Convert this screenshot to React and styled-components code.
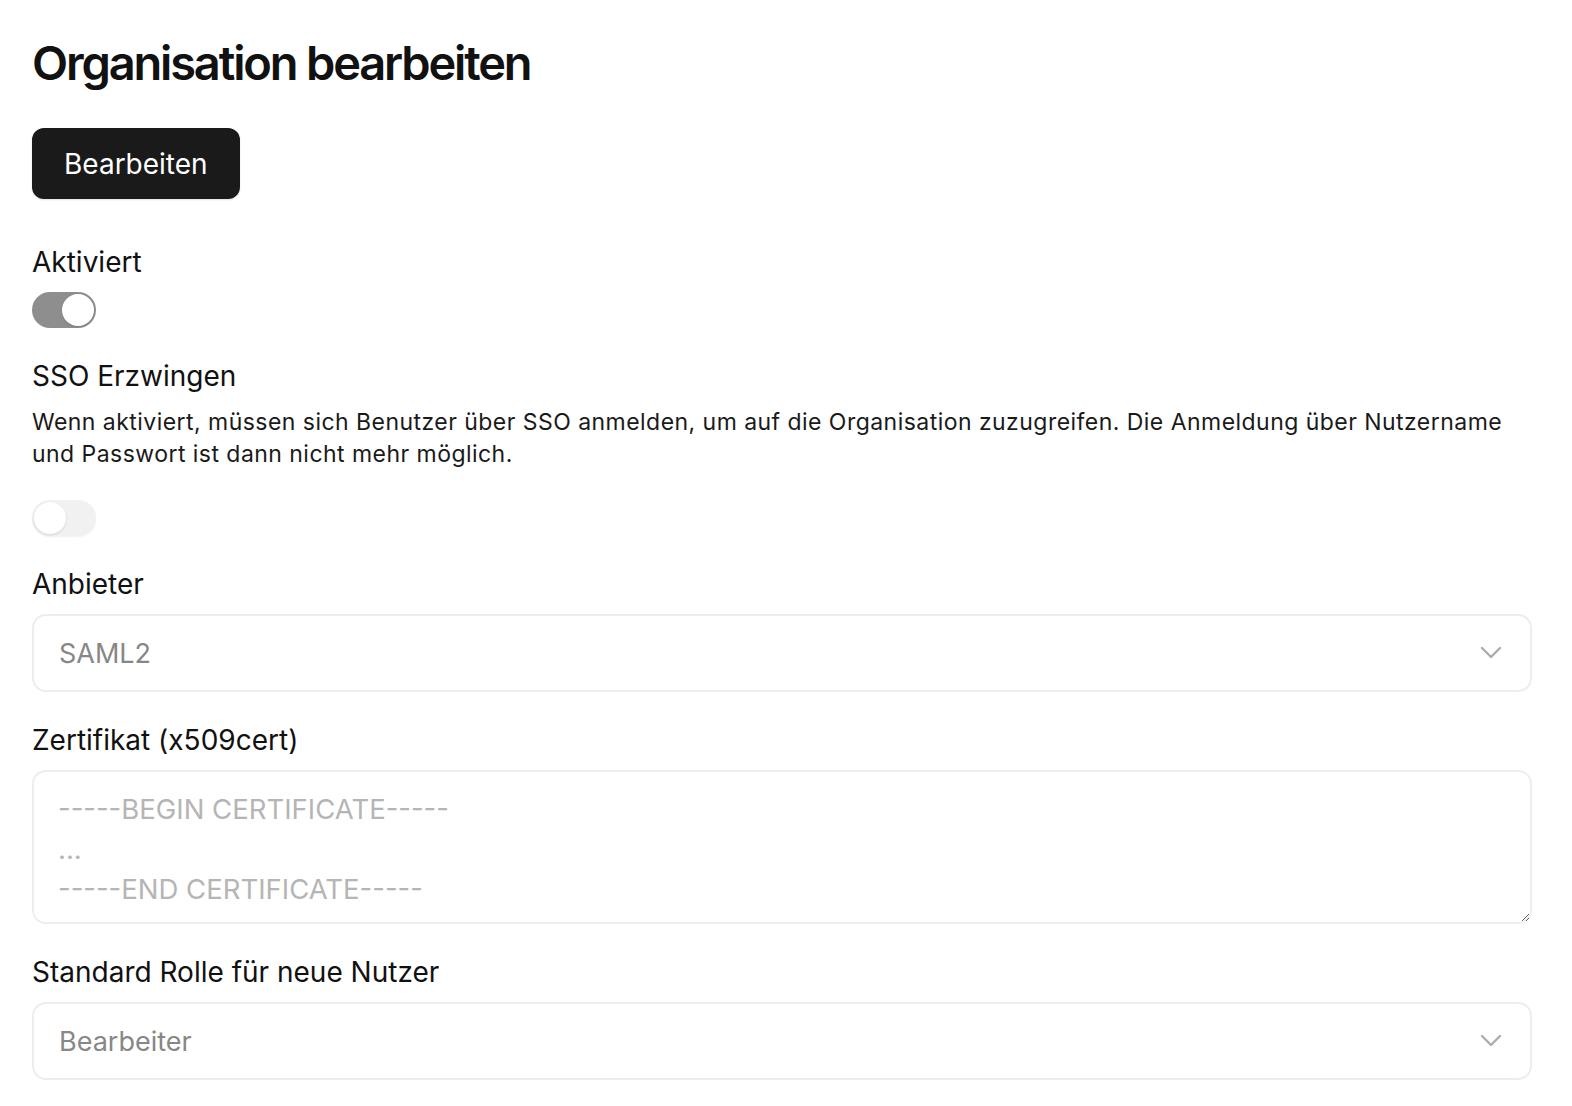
import React from "react";
import styled, { createGlobalStyle } from "styled-components";

const GlobalStyle = createGlobalStyle`
  * { box-sizing: border-box; }
  html, body { margin: 0; padding: 0; background: #ffffff; }
  body {
    font-family: Inter, "Noto Sans", "Liberation Sans", sans-serif;
    color: #111111;
    -webkit-font-smoothing: antialiased;
  }
`;

const Page = styled.main`
  padding: 34px 40px 0 32px;
  display: flex;
  flex-direction: column;
`;

const Title = styled.h1`
  margin: 0;
  font-size: 47px;
  line-height: 58px;
  font-weight: 600;
  letter-spacing: -0.046em;
  color: #111111;
`;

const PrimaryButton = styled.button`
  align-self: flex-start;
  margin-top: 36px;
  margin-bottom: 45px;
  height: 71px;
  padding: 0 32px;
  border: none;
  border-radius: 12px;
  background: #1a1a1a;
  color: #ffffff;
  font-family: inherit;
  font-size: 28px;
  font-weight: 400;
  box-shadow: 0 1px 2px rgba(0, 0, 0, 0.12);
  cursor: pointer;
`;

const Field = styled.section`
  display: flex;
  flex-direction: column;
  align-items: stretch;
  margin-bottom: 30px;
  &:last-child {
    margin-bottom: 0;
  }
`;

const Label = styled.label`
  font-size: 28px;
  line-height: 36px;
  font-weight: 400;
  color: #111111;
  margin-bottom: 12px;
`;

const Description = styled.p`
  margin: 0 0 30px 0;
  font-size: 23px;
  line-height: 32px;
  letter-spacing: 0.02em;
  color: #1a1a1a;
`;

const Track = styled.span`
  position: relative;
  display: inline-block;
  width: 64px;
  height: 36px;
  border-radius: 18px;
  background: ${(p) => (p.$on ? "#8e8e8e" : "#f1f1f1")};
  box-shadow: ${(p) => (p.$on ? "none" : "0 1px 2px rgba(0,0,0,0.06)")};
`;

const Knob = styled.span`
  position: absolute;
  top: 2px;
  left: ${(p) => (p.$on ? "30px" : "2px")};
  width: 32px;
  height: 32px;
  border-radius: 50%;
  background: #ffffff;
  box-shadow: 0 1px 3px rgba(0, 0, 0, 0.12);
`;

const SwitchWrap = styled.div`
  display: flex;
`;

const Switch = ({ on }) => (
  <SwitchWrap>
    <Track $on={on} role="switch" aria-checked={on}>
      <Knob $on={on} />
    </Track>
  </SwitchWrap>
);

const SelectBox = styled.div`
  height: 78px;
  display: flex;
  align-items: center;
  justify-content: space-between;
  padding: 0 28px 0 25px;
  border: 2px solid #ededed;
  border-radius: 14px;
  background: #ffffff;
`;

const SelectValue = styled.span`
  font-size: 27px;
  color: #878787;
`;

const Chevron = () => (
  <svg width="22" height="14" viewBox="0 0 22 14" fill="none">
    <polyline
      points="2,2 11,11 20,2"
      stroke="#adadad"
      strokeWidth="2.4"
      strokeLinecap="round"
      strokeLinejoin="round"
    />
  </svg>
);

const Select = ({ value }) => (
  <SelectBox>
    <SelectValue>{value}</SelectValue>
    <Chevron />
  </SelectBox>
);

const TextArea = styled.textarea`
  display: block;
  width: 100%;
  height: 154px;
  padding: 17px 24px 16px 24px;
  border: 2px solid #ededed;
  border-radius: 14px;
  font-family: inherit;
  font-size: 27.5px;
  line-height: 40px;
  color: #333333;
  resize: vertical;
  outline: none;
  &::placeholder {
    color: #b5b5b5;
  }
`;

export default function App() {
  return (
    <>
      <GlobalStyle />
      <Page>
        <Title>Organisation bearbeiten</Title>
        <PrimaryButton type="button">Bearbeiten</PrimaryButton>

        <Field>
          <Label>Aktiviert</Label>
          <Switch on />
        </Field>

        <Field>
          <Label>SSO Erzwingen</Label>
          <Description>
            Wenn aktiviert, müssen sich Benutzer über SSO anmelden, um auf die
            Organisation zuzugreifen. Die Anmeldung über Nutzername und Passwort
            ist dann nicht mehr möglich.
          </Description>
          <Switch on={false} />
        </Field>

        <Field>
          <Label>Anbieter</Label>
          <Select value="SAML2" />
        </Field>

        <Field>
          <Label>Zertifikat (x509cert)</Label>
          <TextArea
            placeholder={"-----BEGIN CERTIFICATE-----\n...\n-----END CERTIFICATE-----"}
          />
        </Field>

        <Field>
          <Label>Standard Rolle für neue Nutzer</Label>
          <Select value="Bearbeiter" />
        </Field>
      </Page>
    </>
  );
}
